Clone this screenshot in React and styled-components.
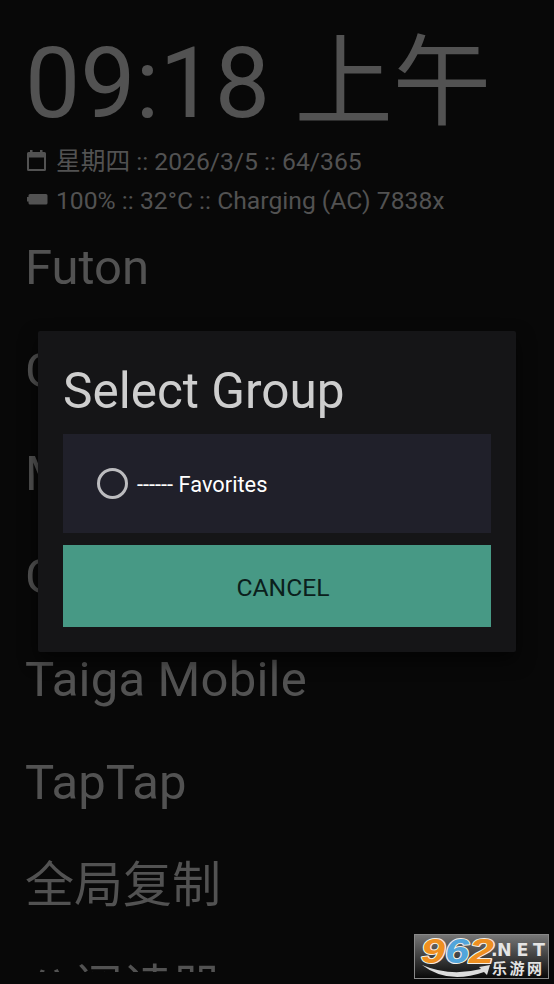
import React from "react";
import styled, { createGlobalStyle } from "styled-components";

const GlobalStyle = createGlobalStyle`
  * { box-sizing: border-box; }
  body { margin: 0; background: #080808; overflow: hidden; }
`;

const Screen = styled.main`
  position: relative;
  width: 554px;
  height: 984px;
  overflow: hidden;
  background: #080808;
  color: #525252;
  font-family: Roboto, "Noto Sans CJK SC", sans-serif;
`;

const Launcher = styled.div`
  height: 972px;
  padding: 25px 25px 0;
  overflow: hidden;
`;

const Clock = styled.div`
  height: 117px;
  line-height: 118px;
  font-size: 98.4px;
  white-space: nowrap;
`;

const StatusLine = styled.div`
  display: flex;
  align-items: center;
  gap: 7px;
  height: 39px;
  font-size: 24.7px;
  line-height: 39px;
  white-space: nowrap;
`;

const StatusIcon = styled.svg`
  width: 24px;
  height: 24px;
  flex: none;
  fill: currentColor;
`;

const AppList = styled.ul`
  list-style: none;
  margin: -5px 0 0;
  padding: 0;
`;

const AppItem = styled.li`
  height: 103px;
  line-height: ${(p) => (p.$cjk ? "106px" : "105px")};
  font-size: 49px;
  letter-spacing: ${(p) => p.$spacing || "0"};
  white-space: nowrap;
`;

const LowGlyph = styled.span`
  vertical-align: -4px;
`;

const Dialog = styled.section`
  position: absolute;
  left: 38px;
  top: 331px;
  width: 478px;
  height: 321px;
  padding: 24px 25px;
  border-radius: 2px;
  background: #151517;
  box-shadow: 0 8px 18px rgba(0, 0, 0, 0.6);
`;

const DialogTitle = styled.h1`
  margin: 0;
  height: 79px;
  line-height: 73px;
  font-size: 49.5px;
  font-weight: 400;
  color: #cecece;
`;

const Option = styled.label`
  display: flex;
  align-items: center;
  gap: 9px;
  height: 99px;
  padding-left: 34px;
  background: #20202a;
  color: #fff;
  font-size: 21.8px;
`;

const OptionText = styled.span`
  padding-top: 2px;
`;

const RadioRing = styled.span`
  width: 31px;
  height: 31px;
  border: 3px solid #bcbcbf;
  border-radius: 50%;
`;

const CancelButton = styled.button`
  display: block;
  width: 100%;
  height: 82px;
  margin-top: 12px;
  padding: 2px 0 0 12px;
  border: 0;
  background: #479985;
  color: #0b201c;
  font: 400 24.7px Roboto, sans-serif;
`;

const Watermark = styled.svg`
  position: absolute;
  left: 414px;
  top: 934px;
  width: 135px;
  height: 45px;
`;

const apps = [
  { name: "Futon" },
  { name: "G" },
  { name: "M" },
  { name: "G" },
  { name: "Taiga Mobile", spacing: "0.2px" },
  { name: "TapTap" },
];

export default function App() {
  return (
    <Screen>
      <GlobalStyle />
      <Launcher>
        <Clock>09:18 上午</Clock>
        <StatusLine>
          <StatusIcon viewBox="0 0 24 24">
            <path fillRule="evenodd" d="M3.500 2H5V0H7.500V2H15V0H17.500V2H19.500Q21 2 21 3.500V19.500Q21 21 19.500 21H3.500Q2 21 2 19.500V3.500Q2 2 3.500 2ZM4 7.500V19H19V7.500Z" />
          </StatusIcon>
          <span>星期四 :: 2026/3/5 :: 64/365</span>
        </StatusLine>
        <StatusLine>
          <StatusIcon viewBox="0 0 24 24">
            <path d="M5 5H21Q22.500 5 22.500 6.500V14Q22.500 15.500 21 15.500H5Q3.500 15.500 3.500 14V12.500H2V8H3.500V6.500Q3.500 5 5 5Z" />
          </StatusIcon>
          <span>100% :: 32°C :: Charging (AC) 7838x</span>
        </StatusLine>
        <AppList>
          {apps.map(({ name, spacing }, index) => (
            <AppItem key={index} $spacing={spacing}>{name}</AppItem>
          ))}
          <AppItem $cjk>全局复制</AppItem>
          <AppItem $cjk><LowGlyph>公</LowGlyph>阅读器</AppItem>
        </AppList>
      </Launcher>
      <Dialog role="dialog" aria-label="Select Group">
        <DialogTitle>Select Group</DialogTitle>
        <Option><RadioRing /><OptionText>------ Favorites</OptionText></Option>
        <CancelButton>CANCEL</CancelButton>
      </Dialog>
      <Watermark viewBox="0 0 135 45">
        <defs>
          <linearGradient id="plate" x2="0" y2="1">
            <stop stopColor="#777" />
            <stop offset="1" stopColor="#080808" />
          </linearGradient>
        </defs>
        <rect x=".5" y=".5" width="134" height="44" fill="url(#plate)" stroke="#888" />
        <g fontFamily="Liberation Sans, sans-serif" fontWeight="700" fontStyle="italic" fontSize="35" stroke="#f4eee5" strokeWidth="2" paintOrder="stroke" strokeLinejoin="round">
          <text x="7" y="28.500" fill="#ee8f20" textLength="24" lengthAdjust="spacingAndGlyphs">9</text>
          <text x="31" y="28.500" fill="#52a5db" textLength="24" lengthAdjust="spacingAndGlyphs">6</text>
          <text x="55" y="28.500" fill="#ee8f20" textLength="25" lengthAdjust="spacingAndGlyphs">2</text>
        </g>
        <path d="M8 31Q36 43 67 35L65 33L76 31L73 41L70 38Q34 51 8 31Z" fill="#ddd" />
        <g fill="#e4e4e4" fontFamily="DejaVu Sans, sans-serif" fontWeight="700" fontSize="17.500">
          <text x="77" y="22">.</text>
          <text x="83" y="22" textLength="48">NET</text>
        </g>
        <text x="78" y="40" fill="#e4e4e4" fontFamily="Noto Sans CJK SC, sans-serif" fontWeight="700" fontSize="15" textLength="50">乐游网</text>
      </Watermark>
    </Screen>
  );
}
